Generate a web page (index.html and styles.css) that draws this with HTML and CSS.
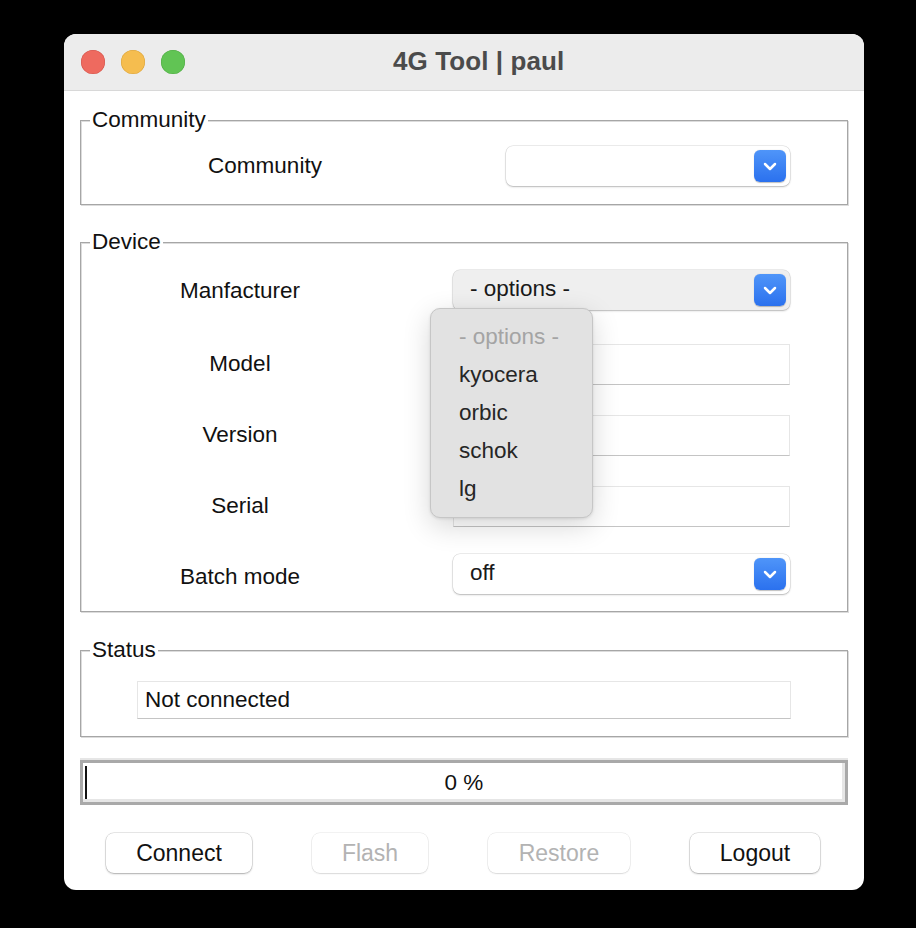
FILE: index.html
```html
<!DOCTYPE html>
<html lang="en">
<head>
<meta charset="utf-8">
<title>4G Tool | paul</title>
<link rel="stylesheet" href="styles.css">
</head>
<body>
<div class="window">
  <header class="titlebar">
    <div class="lights">
      <span class="light red"></span>
      <span class="light yellow"></span>
      <span class="light green"></span>
    </div>
    <div class="title">4G Tool | paul</div>
  </header>

  <main class="content">
    <fieldset class="group group-community">
      <legend>Community</legend>
      <div class="form form-community">
        <div class="label">Community</div>
        <div class="select">
          <span class="select-text"></span>
          <span class="select-btn"><svg viewBox="0 0 14 9" width="14" height="9"><polyline points="2,2 7,7 12,2" fill="none" stroke="#fff" stroke-width="2.5" stroke-linecap="round" stroke-linejoin="round"/></svg></span>
        </div>
      </div>
    </fieldset>

    <fieldset class="group group-device">
      <legend>Device</legend>
      <div class="form form-device">
        <div class="label">Manfacturer</div>
        <div class="select select-active">
          <span class="select-text">- options -</span>
          <span class="select-btn"><svg viewBox="0 0 14 9" width="14" height="9"><polyline points="2,2 7,7 12,2" fill="none" stroke="#fff" stroke-width="2.5" stroke-linecap="round" stroke-linejoin="round"/></svg></span>
        </div>
        <div class="label">Model</div>
        <div class="input"></div>
        <div class="label">Version</div>
        <div class="input"></div>
        <div class="label">Serial</div>
        <div class="input"></div>
        <div class="label">Batch mode</div>
        <div class="select select-batch">
          <span class="select-text">off</span>
          <span class="select-btn"><svg viewBox="0 0 14 9" width="14" height="9"><polyline points="2,2 7,7 12,2" fill="none" stroke="#fff" stroke-width="2.5" stroke-linecap="round" stroke-linejoin="round"/></svg></span>
        </div>
      </div>
    </fieldset>

    <fieldset class="group group-status">
      <legend>Status</legend>
      <div class="input status-input">Not connected</div>
    </fieldset>

    <div class="progress">
      <span class="progress-fill"></span>
      <span class="progress-text">0 %</span>
    </div>

    <div class="buttons">
      <button class="btn btn-connect">Connect</button>
      <button class="btn btn-flash" disabled>Flash</button>
      <button class="btn btn-restore" disabled>Restore</button>
      <button class="btn btn-logout">Logout</button>
    </div>
  </main>

  <ul class="popup">
    <li class="popup-item popup-placeholder">- options -</li>
    <li class="popup-item">kyocera</li>
    <li class="popup-item">orbic</li>
    <li class="popup-item">schok</li>
    <li class="popup-item">lg</li>
  </ul>
</div>
</body>
</html>
```

FILE: styles.css
```css
* { box-sizing: border-box; }

html, body {
  margin: 0;
  padding: 0;
  background: #000;
}

body {
  font-family: "Liberation Sans", Arial, sans-serif;
  font-size: 22.5px;
  color: #111;
  padding: 34px 0 0 64px;
  height: 928px;
}

.window {
  position: relative;
  width: 800px;
  height: 856px;
  background: #fff;
  border-radius: 12px;
  overflow: hidden;
}

/* Title bar */
.titlebar {
  height: 57px;
  background: #ececec;
  border-bottom: 1px solid #d8d8d8;
  display: flex;
  align-items: center;
}

.lights {
  display: flex;
  gap: 16px;
  padding-left: 17px;
}

.light {
  width: 24px;
  height: 24px;
  border-radius: 50%;
  display: block;
}
.red { background: #ee6a5f; box-shadow: inset 0 0 0 0.5px #d0534a; }
.yellow { background: #f5bd4f; box-shadow: inset 0 0 0 0.5px #d8a13a; }
.green { background: #61c454; box-shadow: inset 0 0 0 0.5px #4ea842; }

.title {
  margin-left: 208px;
  font-weight: bold;
  font-size: 26px;
  color: #4b4b4b;
  line-height: 30px;
  margin-top: -2px;
  letter-spacing: 0.1px;
}

/* Content */
.content {
  padding: 17px 16px 0 16px;
}

.group {
  margin: 0;
  min-width: 0;
  border: 1px solid #a6a6a6;
  box-shadow: 1px 1px 0 #dcdcdc, inset 1px 1px 0 #dcdcdc;
  padding: 0;
}

.group legend {
  margin-left: 9px;
  padding: 0 2px;
  font-size: 22.5px;
  line-height: 24px;
  background: #fff;
  color: #111;
}

.group-community { padding: 14px 0 18px; }
.group-device { margin-top: 25px; padding: 1px 0 1px; }
.group-status { margin-top: 26px; padding: 19px 0 17px; }

.form {
  display: grid;
  align-items: center;
}

.form-community {
  grid-template-columns: 368px 284px;
  column-gap: 57px;
  grid-auto-rows: 40px;
}

.form-device {
  grid-template-columns: 318px 337px;
  column-gap: 54px;
  grid-template-rows: 72px 74px 68px 74px 67px;
}

.label {
  text-align: center;
  color: #111;
}

/* Select */
.select {
  height: 40px;
  background: #fff;
  border-radius: 7px;
  box-shadow: 0 0 0 0.5px rgba(0,0,0,0.14), 0 1px 2px rgba(0,0,0,0.22);
  display: flex;
  align-items: center;
  justify-content: space-between;
  padding: 0 4px 0 17px;
}

.select-active {
  background: #efefef;
  margin-top: -3px;
}

.select-batch {
  margin-top: -6px;
}

.select-text {
  color: #1a1a1a;
  line-height: 28px;
  margin-top: -2px;
}

.select-btn {
  width: 32px;
  height: 32px;
  border-radius: 6px;
  background: linear-gradient(#4f95f9, #2b71ee);
  box-shadow: 0 0.5px 1px rgba(0,0,0,0.25);
  display: flex;
  align-items: center;
  justify-content: center;
}

.select-btn svg { display: block; margin-top: 1px; }

/* Input */
.input {
  height: 41px;
  background: #fff;
  border: 1px solid #e6e6e6;
  border-bottom: 1px solid #c4c4c4;
}

.status-input {
  height: 38px;
  margin: 0 56px 0 56px;
  padding-left: 7px;
  line-height: 35px;
  color: #111;
}

/* Progress */
.progress {
  position: relative;
  margin-top: 23px;
  height: 45px;
  border: 3px solid #a9a9a9;
  box-shadow: inset -3px -3px 0 #e6e6e6, 0 -2px 0 #e6e6e6;
  display: flex;
  align-items: center;
  justify-content: center;
}

.progress-fill {
  position: absolute;
  left: 2px;
  top: 3px;
  bottom: 3px;
  width: 2px;
  background: #111;
}

.progress-text {
  color: #111;
  margin-top: 1px;
}

/* Buttons */
.buttons {
  margin-top: 28px;
  display: flex;
  justify-content: center;
  gap: 60px;
  padding-right: 2px;
}

.btn {
  height: 40px;
  border: none;
  border-radius: 8px;
  background: #fff;
  font-family: "Liberation Sans", Arial, sans-serif;
  font-size: 23px;
  color: #111;
  padding: 0;
  box-shadow: 0 0 0 0.5px rgba(0,0,0,0.18), 0 1px 2px rgba(0,0,0,0.25);
}

.btn:disabled {
  color: #b3b3b3;
  box-shadow: 0 0 0 0.5px rgba(0,0,0,0.10), 0 1px 1.5px rgba(0,0,0,0.10);
}

.btn-connect { width: 146px; }
.btn-flash { width: 116px; }
.btn-restore { width: 142px; }
.btn-logout { width: 130px; }

/* Popup menu */
.popup {
  position: absolute;
  left: 366px;
  top: 274px;
  width: 163px;
  height: 210px;
  margin: 0;
  padding: 9px 0 0 28px;
  list-style: none;
  background: #e2e2e2;
  border: 1px solid #c6c6c6;
  border-radius: 10px;
  box-shadow: 0 8px 28px rgba(0,0,0,0.16), 0 1px 3px rgba(0,0,0,0.10);
}

.popup-item {
  line-height: 38px;
  height: 38px;
  color: #262626;
  font-size: 22.5px;
}

.popup-placeholder {
  color: #a4a4a4;
}
```
